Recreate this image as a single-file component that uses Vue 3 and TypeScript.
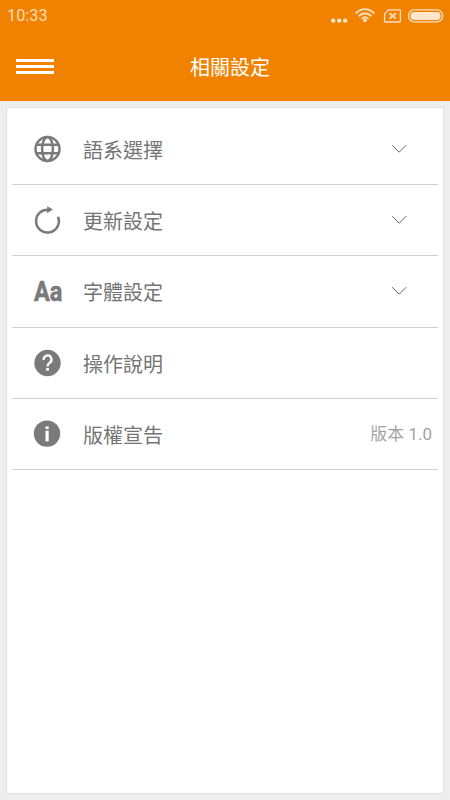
<script setup lang="ts">
type IconName = 'globe' | 'refresh' | 'font' | 'help' | 'info'

interface SettingItem {
  icon: IconName
  label: string
  expandable?: boolean
  note?: string
}

const items: SettingItem[] = [
  { icon: 'globe', label: '語系選擇', expandable: true },
  { icon: 'refresh', label: '更新設定', expandable: true },
  { icon: 'font', label: '字體設定', expandable: true },
  { icon: 'help', label: '操作說明' },
  { icon: 'info', label: '版權宣告', note: '版本 1.0' },
]
</script>

<template>
  <div class="screen">
    <header class="header">
      <div class="status-bar">
        <span class="clock">10:33</span>
        <svg class="status-icons" width="114" height="18" viewBox="0 0 114 18">
          <g class="solid">
            <circle cx="3.2" cy="12.6" r="2.2" />
            <circle cx="9.2" cy="12.6" r="2.2" />
            <circle cx="15.2" cy="12.6" r="2.2" />
            <circle cx="35" cy="12.4" r="1.8" />
            <rect x="80.6" y="3.9" width="30" height="8" rx="3.6" />
          </g>
          <g class="outline">
            <path d="M25.7 5.2Q35-3 44.3 5.2" />
            <path d="M28.6 8Q35 2.4 41.4 8" />
            <path d="M31.5 10.8Q35 7.6 38.5 10.8" />
            <path class="thin" d="M58.4 1.8H69.6Q70.4 1.8 70.4 2.6V13.2Q70.4 14 69.6 14H55.4Q54.6 14 54.6 13.2V5.8Z" />
            <path d="M59.6 5.2L66 10.6M66 5.2L59.6 10.6" />
            <rect class="thin" x="78.6" y="1.9" width="34" height="12" rx="5.5" />
          </g>
        </svg>
      </div>
      <div class="nav-bar">
        <button class="menu-button" aria-label="選單">
          <i></i><i></i><i></i>
        </button>
        <h1 class="title">相關設定</h1>
      </div>
    </header>

    <main class="content">
      <ul class="card">
        <li v-for="item in items" :key="item.icon" class="row">
          <span v-if="item.icon === 'font'" class="icon font-icon">Aa</span>
          <svg v-else class="icon" width="32" height="40" viewBox="0 -6 32 40">
            <g v-if="item.icon === 'globe'" class="stroke">
              <circle cx="15.5" cy="14" r="12" />
              <ellipse cx="15.5" cy="14" rx="5.4" ry="12" />
              <path d="M4.5 9.7H26.5M4.5 18.3H26.5" />
            </g>
            <g v-else-if="item.icon === 'refresh'">
              <path class="stroke" d="M26 10.7A11.4 11.4 0 1 1 17 3.8" />
              <path class="fill" d="M15.3 0.2L21 3.4L14.9 7.2Z" />
            </g>
            <g v-else-if="item.icon === 'help'">
              <circle class="fill" cx="15.5" cy="14" r="13.2" />
              <path class="cut-line" d="M11.7 10.8A3.9 4 0 1 1 17.5 13.9Q15.5 15.4 15.5 17.6" />
              <rect class="cut" x="14.2" y="19" width="2.7" height="2.7" />
            </g>
            <g v-else>
              <circle class="fill" cx="15" cy="13.6" r="13.2" />
              <rect class="cut" x="13.5" y="6.4" width="3.2" height="2.7" />
              <rect class="cut" x="13.5" y="10.7" width="3.2" height="10.7" />
            </g>
          </svg>
          <span class="label">{{ item.label }}</span>
          <svg v-if="item.expandable" class="chevron" width="16" height="10" viewBox="0 0 16 10">
            <path d="M1.2 1.2L8.2 8.2L15.2 1.2" />
          </svg>
          <span v-if="item.note" class="note">{{ item.note }}</span>
        </li>
      </ul>
    </main>
  </div>
</template>

<style>
body {
  background: #eee;
}
</style>

<style scoped>
.screen {
  display: flex;
  flex-direction: column;
  box-sizing: border-box;
  width: 450px;
  height: 800px;
  background: #eee;
  font-family: Roboto, 'Noto Sans CJK TC', sans-serif;
  overflow: hidden;
}

.header {
  box-sizing: border-box;
  flex: none;
  height: 101px;
  background: #f18200;
  border-bottom: 1px solid #fa7d00;
}

.status-bar {
  display: flex;
  align-items: center;
  justify-content: space-between;
  height: 32px;
  padding: 0 6px 0 7px;
}

.clock {
  color: #fddcb5;
  font-size: 16.3px;
  line-height: 32px;
}

.status-icons {
  display: block;
  margin-top: 1px;
}

.solid {
  fill: #fde6cb;
}

.outline {
  fill: none;
  stroke: #fde1c0;
  stroke-width: 1.8;
}

.outline .thin {
  stroke-width: 1.3;
}

.nav-bar {
  display: grid;
  grid-template-columns: 38px 1fr 38px;
  align-items: center;
  height: 68px;
  padding: 0 12px 0 16px;
}

.menu-button {
  display: flex;
  flex-direction: column;
  gap: 3px;
  padding: 0;
  border: 0;
  background: none;
}

.menu-button i {
  width: 38px;
  height: 3px;
  background: #fff;
}

.title {
  margin: 0;
  padding: 3px 0 0 6px;
  color: #fff;
  font-size: 20px;
  font-weight: 400;
  line-height: 30px;
  text-align: center;
}

.content {
  display: flex;
  flex: 1;
  padding: 6px;
}

.card {
  box-sizing: border-box;
  flex: 1;
  margin: 0;
  padding: 5.75px 5px 0;
  border: 1px solid #e0e0e0;
  background: #fff;
  list-style: none;
}

.row {
  display: flex;
  align-items: center;
  box-sizing: border-box;
  height: 71.25px;
  padding-left: 20px;
  border-bottom: 1px solid #d0d0d0;
}

.icon {
  flex: none;
  display: block;
}

.fill {
  fill: #7a7a7a;
}

.stroke {
  fill: none;
  stroke: #7a7a7a;
  stroke-width: 2.5;
}

.cut {
  fill: #fff;
}

.cut-line {
  fill: none;
  stroke: #fff;
  stroke-width: 2.3;
}

.font-icon {
  width: 36px;
  margin: 2px -6px 0 2px;
  color: #7a7a7a;
  font-size: 28px;
  font-weight: 700;
  line-height: 40px;
  transform: scaleX(0.84);
  transform-origin: left center;
  -webkit-text-stroke: 0.6px #7a7a7a;
}

.label {
  margin-left: 19px;
  padding-top: 4px;
  color: #747474;
  font-size: 20px;
  line-height: 30px;
}

.chevron {
  display: block;
  margin: 0 31px 0 auto;
  fill: none;
  stroke: #666;
  stroke-width: 1;
}

.note {
  margin: 0 6px 0 auto;
  padding-top: 1px;
  color: #a3a3a3;
  font-size: 17px;
  line-height: 26px;
}
</style>
